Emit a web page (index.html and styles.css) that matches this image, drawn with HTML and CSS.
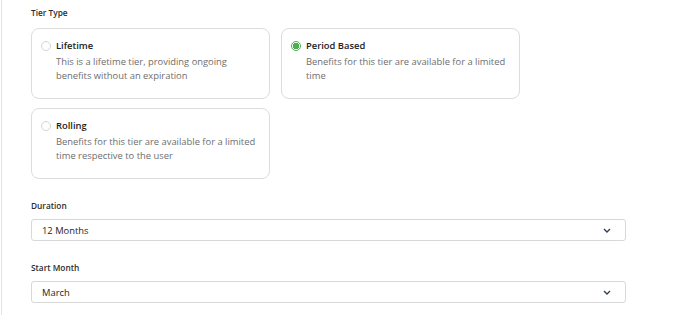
FILE: index.html
```html
<!DOCTYPE html>
<html lang="en">
<head>
  <meta charset="UTF-8" />
  <meta name="viewport" content="width=device-width, initial-scale=1.0"/>
  <title>Tier Settings</title>
  <link rel="stylesheet" href="styles.css">
</head>
<body>

  <div class="panel">
    <div class="field-label">Tier Type</div>

    <div class="tier-grid">
      <div class="tier-card">
        <span class="radio"></span>
        <div class="tier-text">
          <div class="tier-title">Lifetime</div>
          <div class="tier-desc">This is a lifetime tier, providing ongoing benefits without an expiration</div>
        </div>
      </div>

      <div class="tier-card">
        <span class="radio checked"></span>
        <div class="tier-text">
          <div class="tier-title">Period Based</div>
          <div class="tier-desc">Benefits for this tier are available for a limited time</div>
        </div>
      </div>

      <div class="tier-card">
        <span class="radio"></span>
        <div class="tier-text">
          <div class="tier-title">Rolling</div>
          <div class="tier-desc">Benefits for this tier are available for a limited time respective to the user</div>
        </div>
      </div>
    </div>

    <div class="field-label first">Duration</div>
    <div class="select">
      <span>12 Months</span>
      <svg class="chevron" width="8" height="5" viewBox="0 0 8 5"><path d="M1 1 L4 4 L7 1" fill="none" stroke="#2f4158" stroke-width="1.4"/></svg>
    </div>

    <div class="field-label spaced">Start Month</div>
    <div class="select">
      <span>March</span>
      <svg class="chevron" width="8" height="5" viewBox="0 0 8 5"><path d="M1 1 L4 4 L7 1" fill="none" stroke="#2f4158" stroke-width="1.4"/></svg>
    </div>
  </div>

</body>
</html>
```

FILE: styles.css
```css
body {
  font-family: "Open Sans", Arial, sans-serif;
  background-color: #fff;
  margin: 0;
  padding: 0;
}

.panel {
  margin-left: 1px;
  border-left: 1px solid #e3e3e3;
  min-height: 315px;
  padding: 7px 0 0 29px;
  box-sizing: border-box;
}

.field-label {
  font-size: 8.3px;
  line-height: 12px;
  font-weight: 600;
  color: #2b2b2b;
}

.field-label.first {
  margin-top: 21px;
}

.field-label.spaced {
  margin-top: 21px;
}

.tier-grid {
  display: grid;
  grid-template-columns: 239px 239px;
  column-gap: 11px;
  row-gap: 9px;
  margin-top: 9px;
}

.tier-card {
  display: flex;
  gap: 5px;
  height: 71px;
  box-sizing: border-box;
  padding: 10px 11px 0 9px;
  border: 1px solid #dcdcdc;
  border-radius: 8px;
}

.radio {
  flex: none;
  width: 10px;
  height: 10px;
  margin-top: 2px;
  border: 1px solid #d4d4d4;
  border-radius: 50%;
  box-sizing: border-box;
}

.radio.checked {
  border: 1.5px solid #4caf50;
  background: radial-gradient(circle, #4caf50 0 3px, #fff 3.5px);
}

.tier-title {
  font-size: 9.4px;
  line-height: 14px;
  font-weight: 600;
  color: #1c1c1c;
}

.tier-desc {
  margin-top: 2px;
  font-size: 9.4px;
  line-height: 14px;
  color: #6e6e6e;
}

.select {
  display: flex;
  align-items: center;
  justify-content: space-between;
  width: 595px;
  height: 22px;
  box-sizing: border-box;
  margin-top: 7px;
  padding: 0 14px 0 10px;
  border: 1px solid #d8d8d8;
  border-radius: 3px;
  font-size: 9.4px;
  color: #262626;
}
```
